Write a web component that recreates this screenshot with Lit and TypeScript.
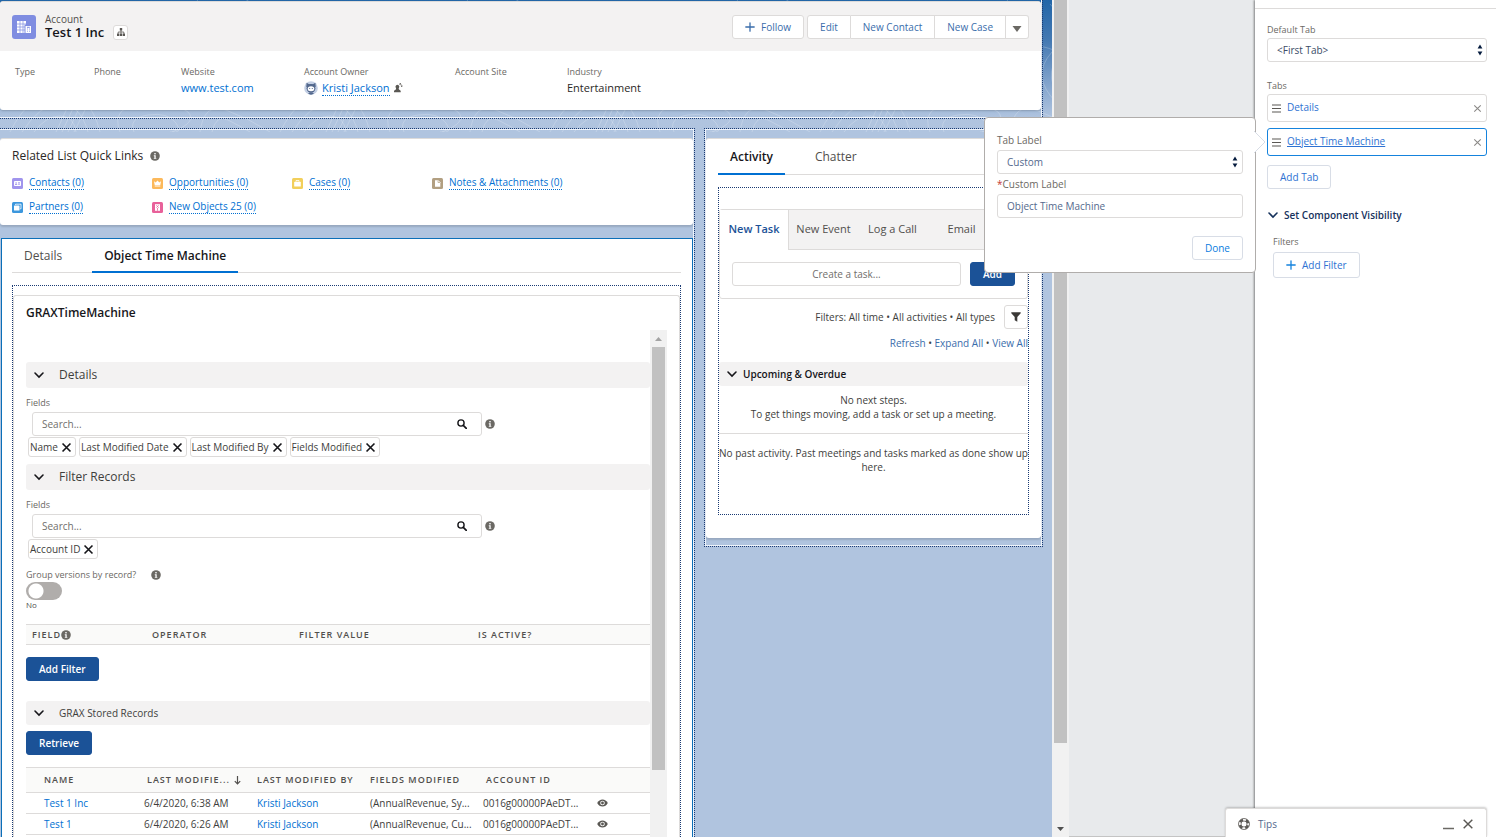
import { LitElement, html, css, svg, nothing } from "lit";
import { customElement, state } from "lit/decorators.js";
import { classMap } from "lit/directives/class-map.js";

const base = css`
  :host,
  * {
    box-sizing: border-box;
  }
  button,
  input,
  select {
    font: inherit;
    color: inherit;
    margin: 0;
  }
  a {
    text-decoration: none;
    color: #0070d2;
  }
  h1,
  h2,
  h3,
  p,
  ul,
  dl,
  dd {
    margin: 0;
    padding: 0;
  }
  ul {
    list-style: none;
  }
  svg {
    display: block;
    flex: none;
  }
  .btn {
    display: inline-flex;
    align-items: center;
    justify-content: center;
    height: 24px;
    padding: 0 12px;
    border: 1px solid #dddbda;
    border-radius: 3px;
    background: #fff;
    color: #3a6dab;
    white-space: nowrap;
  }
  .brand {
    background: #1b5297;
    border-color: #1b5297;
    color: #fff;
    font-weight: 600;
  }
  .field {
    width: 100%;
    height: 24px;
    border: 1px solid #dddbda;
    border-radius: 3px;
    background: #fff;
    padding: 0 9px;
    outline: none;
  }
  .field::placeholder {
    color: #706e6b;
    opacity: 1;
  }
`;

const chevron = (size = 12, color = "#16161a") => html`<svg width=${size} height=${size} viewBox="0 0 12 12" aria-hidden="true">
  <path d="M2 4l4 4 4-4" fill="none" stroke=${color} stroke-width="1.6" stroke-linecap="round" />
</svg>`;

const info = html`<svg width="10" height="10" viewBox="0 0 10 10" aria-hidden="true">
  <circle cx="5" cy="5" r="4.8" fill="#6b6964" />
  <rect x="4.3" y="2" width="1.4" height="1.4" fill="#fff" />
  <path d="M3.8 4.3h1.9v2.6h.6v.9H3.8v-.9h.6V5.2h-.6z" fill="#fff" />
</svg>`;

const cross = (size: number, color: string, width: number) => html`<svg width=${size} height=${size} viewBox="0 0 10 10" aria-hidden="true">
  <path d="M1.4 1.4l7.2 7.2M8.6 1.4L1.4 8.6" stroke=${color} stroke-width=${width} />
</svg>`;

const search = html`<svg width="10" height="10" viewBox="0 0 10 10" aria-hidden="true">
  <circle cx="4" cy="4" r="3.1" fill="none" stroke="#16161a" stroke-width="1.4" />
  <path d="M6.3 6.3l3 3" stroke="#16161a" stroke-width="1.7" stroke-linecap="round" />
</svg>`;

const plus = (color: string) => html`<svg width="10" height="10" viewBox="0 0 10 10" aria-hidden="true">
  <path d="M5 .8v8.4M.8 5h8.4" stroke=${color} stroke-width="1.3" stroke-linecap="round" />
</svg>`;

const eye = html`<svg width="11" height="8" viewBox="0 0 11 8" aria-hidden="true">
  <path d="M.2 4C2.4-.8 8.6-.8 10.8 4 8.600 8.800 2.400 8.800 .2 4z" fill="#5a5854" />
  <circle cx="5.500" cy="4" r="2.300" fill="#fff" />
  <circle cx="5.500" cy="4" r="1.400" fill="#5a5854" />
</svg>`;

const spinner = html`<svg width="6" height="12" viewBox="0 0 6 12" aria-hidden="true">
  <path d="M3 .6l2.400 3.900H.6zM3 11.400L.6 7.500h4.800z" fill="#061c3f" />
</svg>`;

const glyphs: Record<string, { color: string; shape: unknown }> = {
  contacts: {
    color: "#a094ed",
    shape: svg`<rect x="2" y="3" width="7" height="5" rx=".8" fill="#fff"/><path d="M3 6.500h2.200M4.100 4v2M6 4.800h2M6 6.200h2" stroke="#a094ed" stroke-width=".9"/>`,
  },
  opportunities: {
    color: "#fcb95b",
    shape: svg`<path d="M2 3.200l1.700 1.300L5.500 2.400l1.800 2.100L9 3.200 8.300 7H2.700zM2.700 7.600h5.600v1H2.700z" fill="#fff"/>`,
  },
  cases: {
    color: "#f2cf5b",
    shape: svg`<path d="M4 3.700V2.500h3v1.200" fill="none" stroke="#fff" stroke-width=".8"/><rect x="2.200" y="3.700" width="6.600" height="4.800" rx=".6" fill="#fff"/>`,
  },
  notes: {
    color: "#b29f81",
    shape: svg`<path d="M3 2.200h3.300L8.300 4.300v4.500H3z" fill="#fff"/><path d="M6 2.500v2h2" stroke="#b29f81" stroke-width=".7" fill="none"/>`,
  },
  partners: {
    color: "#3c97dd",
    shape: svg`<path d="M3.500 3V2.200h5.500v4.600h-.9" stroke="#fff" stroke-width=".8" fill="none"/><rect x="2" y="3.600" width="5.500" height="4.800" rx=".5" fill="#fff"/>`,
  },
  objects: {
    color: "#e8619a",
    shape: svg`<path d="M3 2.200h5v6.600H3z" fill="#fff"/><path d="M4.300 3.300l2.400 2.300M6.700 3.300L4.300 5.600M5.500 6v2.800" stroke="#e8619a" stroke-width=".8"/>`,
  },
};

const glyph = (name: string) => html`<svg width="11" height="11" viewBox="0 0 11 11" aria-hidden="true">
  <rect width="11" height="11" rx="1.500" fill=${glyphs[name].color} />${glyphs[name].shape}
</svg>`;

@customElement("scroll-track")
class ScrollTrack extends LitElement {
  static styles = css`
    :host {
      display: flex;
      flex-direction: column;
      flex: none;
      width: 17px;
      background: #f1f1f1;
    }
    .arrow {
      height: 17px;
      display: grid;
      place-items: center;
      flex: none;
    }
    .lane {
      flex: 1;
      min-height: 0;
    }
    .thumb {
      margin: 0 2px;
      background: #c1c1c1;
    }
  `;
  static properties = { up: { type: Boolean }, down: { type: Boolean }, size: { type: String } };
  up = false;
  down = false;
  size = "50%";
  render() {
    const arrow = (d: string, fill: string) => html`<div class="arrow">
      <svg width="7" height="4" viewBox="0 0 7 4"><path d=${d} fill=${fill} /></svg>
    </div>`;
    return html`${this.up ? arrow("M3.500 0L7 4H0z", "#a3a3a3") : nothing}
      <div class="lane"><div class="thumb" style="height:${this.size}"></div></div>
      ${this.down ? arrow("M0 0h7L3.500 4z", "#505050") : nothing}`;
  }
}

@customElement("record-header")
class RecordHeader extends LitElement {
  static styles = [
    base,
    css`
      :host {
        display: block;
        background: #fff;
        border-radius: 3px;
        box-shadow: 0 1px 2px rgba(0, 0, 0, 0.18);
        border-top: 1px solid #dddbda;
      }
      .head {
        display: flex;
        align-items: center;
        gap: 9px;
        height: 49px;
        padding: 0 12px;
        background: #f3f2f2;
        border-radius: 3px 3px 0 0;
      }
      .title {
        flex: 1;
      }
      .kind {
        line-height: 11px;
        color: #514f4d;
      }
      .name {
        display: flex;
        align-items: center;
        gap: 9px;
      }
      h1 {
        font-size: 13px;
        line-height: 14px;
        font-weight: 600;
        color: #16161a;
      }
      .tree {
        width: 15px;
        height: 15px;
        padding: 0;
        display: grid;
        place-items: center;
        border: 1px solid #dddbda;
        border-radius: 3px;
        background: #fff;
      }
      .actions {
        display: flex;
        gap: 3px;
      }
      .follow {
        gap: 6px;
      }
      .group {
        display: flex;
      }
      .group .btn {
        border-radius: 0;
        border-left-width: 0;
      }
      .group .btn:first-child {
        border-left-width: 1px;
        border-radius: 3px 0 0 3px;
      }
      .group .btn:last-child {
        border-radius: 0 3px 3px 0;
        padding: 4px 6px 0;
      }
      dl {
        display: grid;
        grid-template-columns: 79px 87px 123px 151px 112px 1fr;
        padding: 15px 15px 13px;
      }
      dt {
        font-size: 9px;
        line-height: 12px;
        color: #6b6964;
      }
      dd {
        display: flex;
        align-items: center;
        gap: 4px;
        height: 18px;
        margin-top: 1px;
        font-size: 11px;
        color: #2b2826;
      }
      .dotted {
        border-bottom: 1px dotted #0070d2;
        line-height: 15px;
      }
    `,
  ];
  render() {
    return html`<div class="head">
        <svg width="24" height="24" viewBox="0 0 24 24" aria-hidden="true">
          <rect width="24" height="24" rx="3" fill="#7f8de1" />
          <path d="M5 6h9v3.500h-1.500V18H5z" fill="#fff" />
          <path d="M8 6v12M11 6v12M5 9h9M5 12h8M5 15h8" stroke="#7f8de1" stroke-width=".7" />
          <path d="M13.500 11H19v7h-5.500z" fill="#fff" />
          <path d="M15 14h.8M17 14h.8M15 16.200h.8M17 16.200h.8M15 12.300h2.800" stroke="#7f8de1" />
        </svg>
        <div class="title">
          <div class="kind">Account</div>
          <div class="name">
            <h1>Test 1 Inc</h1>
            <button class="tree" aria-label="View hierarchy">
              <svg width="8" height="8" viewBox="0 0 8 8">
                <path d="M2.800 0h2.400v2.400H2.800zM0 5.600h2.300V8H0zM2.900 5.600h2.200V8H2.900zM5.700 5.600H8V8H5.700z" fill="#5a5854" />
                <path d="M4 2v3.600M1.200 5.600V4h5.600v1.600" stroke="#5a5854" stroke-width=".8" fill="none" />
              </svg>
            </button>
          </div>
        </div>
        <div class="actions">
          <button class="btn follow">${plus("#3a6dab")}Follow</button>
          <div class="group">
            <button class="btn">Edit</button><button class="btn">New Contact</button><button class="btn">New Case</button
            ><button class="btn" aria-label="More actions">
              <svg width="10" height="6" viewBox="0 0 10 6"><path d="M.5 0h9L5 6z" fill="#6b6964" /></svg>
            </button>
          </div>
        </div>
      </div>
      <dl>
        <div><dt>Type</dt></div>
        <div><dt>Phone</dt></div>
        <div><dt>Website</dt><dd><a href="#">www.test.com</a></dd></div>
        <div>
          <dt>Account Owner</dt>
          <dd>
            <svg width="14" height="14" viewBox="0 0 14 14" aria-hidden="true">
              <circle cx="7" cy="7" r="6.800" fill="#c3cfe4" />
              <path d="M2.600 1.800l2.500 1.400h3.800l2.500-1.400.3 4.200H2.300z" fill="#54698d" />
              <circle cx="7" cy="7.300" r="4.400" fill="#54698d" />
              <ellipse cx="7" cy="7.700" rx="3.300" ry="2.500" fill="#fff" />
              <circle cx="5.700" cy="7.500" r=".6" fill="#54698d" />
              <circle cx="8.300" cy="7.500" r=".6" fill="#54698d" />
              <path d="M4 12.500c1-1.500 5-1.500 6 0-1.500 1.500-4.500 1.500-6 0z" fill="#54698d" />
            </svg>
            <a class="dotted" href="#">Kristi Jackson</a>
            <svg width="9" height="10" viewBox="0 0 9 10" aria-hidden="true">
              <path d="M1.500 3.200a2 2.200 0 0 1 3.800 0c0 1.300-.6 1.800-.6 2.700 0 .8 2 1 2 2.200V9.300H0V8.100c0-1.200 2.100-1.400 2.100-2.200 0-.9-.6-1.400-.6-2.700z" fill="#5a5854" />
              <path d="M5.600 1.200c1.600 0 2.400.8 2.400 2.400M5.300 1.200L7 .2M8 4L7 2.800" fill="none" stroke="#5a5854" stroke-width=".8" />
            </svg>
          </dd>
        </div>
        <div><dt>Account Site</dt></div>
        <div><dt>Industry</dt><dd>Entertainment</dd></div>
      </dl>`;
  }
}

@customElement("quick-links")
class QuickLinks extends LitElement {
  static styles = [
    base,
    css`
      :host {
        display: block;
        background: #fff;
        border-top: 1px solid #dddbda;
        border-radius: 3px;
        padding: 8px 12px 6px;
        box-shadow: 0 2px 2px rgba(0, 0, 0, 0.14);
      }
      h2 {
        display: flex;
        align-items: center;
        gap: 7px;
        font-size: 12px;
        line-height: 18px;
        font-weight: 400;
        color: #2b2826;
      }
      ul {
        display: grid;
        grid-template-columns: repeat(4, 140px);
        grid-auto-rows: 24px;
        margin-top: 6px;
      }
      li {
        display: flex;
        align-items: center;
        gap: 6px;
        white-space: nowrap;
      }
      a {
        line-height: 13px;
        border-bottom: 1px dotted #0070d2;
      }
    `,
  ];
  render() {
    const links = [
      ["contacts", "Contacts (0)"],
      ["opportunities", "Opportunities (0)"],
      ["cases", "Cases (0)"],
      ["notes", "Notes & Attachments (0)"],
      ["partners", "Partners (0)"],
      ["objects", "New Objects 25 (0)"],
    ];
    return html`<h2>Related List Quick Links ${info}</h2>
      <ul>
        ${links.map(([icon, text]) => html`<li>${glyph(icon)}<a href="#">${text}</a></li>`)}
      </ul>`;
  }
}

const tabStyles = css`
  .tabs {
    display: flex;
    gap: 18px;
    border-bottom: 1px solid #dddbda;
  }
  .tab {
    height: 34px;
    margin-bottom: -1px;
    padding: 2px 12px 0;
    border: 0;
    border-bottom: 2px solid transparent;
    background: none;
    font-size: 12px;
    color: #514f4d;
  }
  .tab.on {
    border-color: #0070d2;
    font-weight: 600;
    color: #16161a;
  }
`;

@customElement("time-machine")
class TimeMachine extends LitElement {
  static styles = [
    base,
    tabStyles,
    css`
      :host {
        display: flex;
        flex-direction: column;
        background: #fff;
        border: 1px solid #0b6fb8;
        border-bottom: 0;
        padding: 0 11px 0 10px;
        min-height: 0;
      }
      .tabs {
        flex: none;
      }
      .zone {
        flex: 1;
        min-height: 0;
        display: flex;
        margin-top: 12px;
        padding-top: 9px;
        border: 1px dotted #1a3a73;
        border-bottom: 0;
      }
      .card {
        flex: 1;
        min-width: 0;
        display: flex;
        flex-direction: column;
        border: 1px solid #dddbda;
        border-bottom: 0;
        border-radius: 3px 3px 0 0;
        padding: 8px 12px 0;
      }
      h2 {
        font-size: 12px;
        line-height: 18px;
        font-weight: 600;
        color: #16161a;
      }
      .scroller {
        flex: 1;
        min-height: 0;
        display: flex;
        margin-top: 8px;
      }
      .content {
        flex: 1;
        min-width: 0;
        padding-top: 32px;
        overflow: hidden;
      }
      .section {
        display: flex;
        align-items: center;
        gap: 14px;
        width: 100%;
        height: 26px;
        padding: 0 7px;
        border: 0;
        border-radius: 3px;
        background: #f3f2f2;
        font-size: 12px;
        color: #3e3e3c;
      }
      .section.small {
        height: 24px;
        font-size: 10px;
        margin: 20px 0 6px;
      }
      .caption {
        display: block;
        font-size: 9px;
        line-height: 12px;
        color: #6b6964;
      }
      .block {
        padding: 9px 0 7px;
      }
      .row {
        display: flex;
        align-items: center;
        gap: 3px;
        margin: 3px 0 1px;
        padding-left: 6px;
      }
      .box {
        position: relative;
        width: 450px;
      }
      .box svg {
        position: absolute;
        right: 15px;
        top: 7px;
      }
      .pills {
        display: flex;
        gap: 3px;
        padding-left: 2px;
      }
      .pill {
        display: flex;
        align-items: center;
        gap: 3px;
        height: 20px;
        padding: 0 3px 0 1px;
        border: 1px solid #dddbda;
        border-radius: 3px;
        white-space: nowrap;
        color: #3e3e3c;
      }
      .pill button {
        display: flex;
        padding: 0;
        border: 0;
        background: none;
      }
      .group {
        display: flex;
        gap: 15px;
        align-items: center;
        margin-top: 3px;
      }
      .toggle {
        appearance: none;
        display: block;
        width: 36px;
        height: 18px;
        margin: 1px 0 0;
        border-radius: 9px;
        background: radial-gradient(circle at 10px 9px, #fff 7px, transparent 8px) #b0adab;
      }
      .state {
        font-size: 8px;
        line-height: 10px;
        color: #514f4d;
      }
      table {
        width: 100%;
        border-collapse: collapse;
        table-layout: fixed;
      }
      th,
      td {
        padding: 0 0 0 12px;
        text-align: left;
        font-weight: 400;
        white-space: nowrap;
      }
      th {
        font-size: 9px;
        font-weight: 600;
        letter-spacing: 1px;
        text-transform: uppercase;
        color: #514f4d;
        background: #fafaf9;
      }
      th svg {
        display: inline-block;
        vertical-align: -2px;
      }
      tr {
        border-top: 1px solid #dddbda;
        border-bottom: 1px solid #dddbda;
      }
      .filters {
        margin: 14px 0 12px;
      }
      .filters th {
        height: 20px;
        padding-left: 6px;
      }
      .records {
        margin-top: 12px;
      }
      .records th {
        height: 25px;
      }
      .records td {
        height: 21px;
        color: #3e3e3c;
      }
      .records .first {
        padding-left: 18px;
      }
      .records th.shift {
        padding-left: 15px;
      }
      .sort {
        display: flex;
        align-items: center;
        gap: 4px;
      }
    `,
  ];
  @state() private tab = "Object Time Machine";
  private lookup(id: string, names: string[]) {
    return html`<div class="block">
      <label class="caption" for=${id}>Fields</label>
      <div class="row">
        <div class="box"><input class="field" id=${id} placeholder="Search..." />${search}</div>
        ${info}
      </div>
      <div class="pills">
        ${names.map((n) => html`<span class="pill">${n}<button aria-label="Remove ${n}">${cross(11, "#16161a", 1.5)}</button></span>`)}
      </div>
    </div>`;
  }
  render() {
    const rows = [
      ["Test 1 Inc", "6/4/2020, 6:38 AM", "(AnnualRevenue, Sy..."],
      ["Test 1", "6/4/2020, 6:26 AM", "(AnnualRevenue, Cu..."],
    ];
    return html`<div class="tabs" role="tablist">
        ${["Details", "Object Time Machine"].map(
          (t) => html`<button role="tab" class=${classMap({ tab: true, on: t === this.tab })} @click=${() => (this.tab = t)}>${t}</button>`
        )}
      </div>
      <div class="zone">
        <div class="card">
          <h2>GRAXTimeMachine</h2>
          <div class="scroller">
            <div class="content">
              <button class="section">${chevron()}Details</button>
              ${this.lookup("fields", ["Name", "Last Modified Date", "Last Modified By", "Fields Modified"])}
              <button class="section">${chevron()}Filter Records</button>
              ${this.lookup("records", ["Account ID"])}
              <div class="group"><label class="caption" for="group">Group versions by record?</label>${info}</div>
              <input class="toggle" id="group" type="checkbox" role="switch" />
              <div class="state">No</div>
              <table class="filters">
                <colgroup><col width="120" /><col width="147" /><col width="179" /><col /></colgroup>
                <thead>
                  <tr><th>Field${info}</th><th>Operator</th><th>Filter Value</th><th>Is Active?</th></tr>
                </thead>
              </table>
              <button class="btn brand">Add Filter</button>
              <button class="section small">${chevron()}GRAX Stored Records</button>
              <button class="btn brand">Retrieve</button>
              <table class="records">
                <colgroup><col width="106" /><col width="113" /><col width="113" /><col width="113" /><col width="114" /><col /></colgroup>
                <thead>
                  <tr>
                    <th class="first">Name</th>
                    <th class="shift">
                      <span class="sort"
                        >Last Modifie...<svg width="7" height="9" viewBox="0 0 7 9" aria-hidden="true">
                          <path d="M3.500 0v8M.8 5.200l2.700 2.800 2.700-2.800" fill="none" stroke="#514f4d" stroke-width="1.200" /></svg
                      ></span>
                    </th>
                    <th>Last Modified By</th>
                    <th>Fields Modified</th>
                    <th class="shift">Account ID</th>
                    <th></th>
                  </tr>
                </thead>
                <tbody>
                  ${rows.map(
                    ([name, date, fields]) => html`<tr>
                      <td class="first"><a href="#">${name}</a></td>
                      <td>${date}</td>
                      <td><a href="#">Kristi Jackson</a></td>
                      <td>${fields}</td>
                      <td>0016g00000PAeDT...</td>
                      <td>${eye}</td>
                    </tr>`
                  )}
                </tbody>
              </table>
            </div>
            <scroll-track up size="86.400%"></scroll-track>
          </div>
        </div>
      </div>`;
  }
}

@customElement("activity-panel")
class ActivityPanel extends LitElement {
  static styles = [
    base,
    tabStyles,
    css`
      :host {
        display: block;
        background: #fff;
        border-top: 1px solid #dddbda;
        border-radius: 3px;
        padding: 0 12px 23px;
        box-shadow: 0 2px 2px rgba(0, 0, 0, 0.14);
        color: #3e3e3c;
      }
      .tabs .tab {
        height: 36px;
      }
      .zone {
        margin-top: 12px;
        border: 1px dotted #1a3a73;
        padding: 21px 0 40px;
      }
      .composer {
        border: 1px solid #dddbda;
        border-radius: 3px;
      }
      .kinds {
        display: grid;
        grid-template-columns: repeat(4, 69px) 1fr;
        height: 40px;
        background: #f3f2f2;
      }
      .kinds button {
        padding: 0 0 2px;
        border: 0;
        border-bottom: 1px solid #dddbda;
        background: none;
        font-size: 11px;
        color: #514f4d;
      }
      .kinds .on {
        background: #fff;
        border-bottom: 0;
        border-right: 1px solid #dddbda;
        font-weight: 600;
        color: #1b5297;
      }
      .kinds span {
        border-bottom: 1px solid #dddbda;
      }
      .create {
        display: flex;
        gap: 9px;
        padding: 12px;
      }
      .create .field {
        flex: 1;
        min-width: 0;
        text-align: center;
      }
      .filters {
        display: flex;
        align-items: center;
        justify-content: flex-end;
        gap: 9px;
        margin-top: 6px;
      }
      .filters .btn {
        width: 24px;
        padding: 0;
      }
      .links {
        text-align: right;
        line-height: 14px;
        margin-top: 7px;
        white-space: nowrap;
      }
      .links a {
        color: #3a6dab;
      }
      .section {
        display: flex;
        align-items: center;
        gap: 5px;
        width: 100%;
        height: 24px;
        margin: 12px 0 7px;
        padding: 0 7px;
        border: 0;
        border-radius: 3px;
        background: #f3f2f2;
        font-weight: 600;
        color: #16161a;
      }
      p {
        text-align: center;
        line-height: 14px;
      }
      .past {
        margin-top: 12px;
        padding-top: 12px;
        border-top: 1px solid #dddbda;
      }
      .past p {
        margin: 0 -4px;
      }
    `,
  ];
  @state() private tab = "Activity";
  render() {
    return html`<div class="tabs" role="tablist">
        ${["Activity", "Chatter"].map(
          (t) => html`<button role="tab" class=${classMap({ tab: true, on: t === this.tab })} @click=${() => (this.tab = t)}>${t}</button>`
        )}
      </div>
      <div class="zone">
        <div class="composer">
          <div class="kinds">
            <button class="on">New Task</button><button>New Event</button><button>Log a Call</button><button>Email</button><span></span>
          </div>
          <div class="create">
            <input class="field" aria-label="Subject" placeholder="Create a task..." />
            <button class="btn brand">Add</button>
          </div>
        </div>
        <div class="filters">
          <span>Filters: All time • All activities • All types</span>
          <button class="btn" aria-label="Filter">
            <svg width="10" height="10" viewBox="0 0 10 10"><path d="M.3.300h9.400v1L6.300 5v4.700L3.700 8.300V5L.3 1.300z" fill="#3a3836" /></svg>
          </button>
        </div>
        <div class="links"><a href="#">Refresh</a> • <a href="#">Expand All</a> • <a href="#">View All</a></div>
        <button class="section">${chevron()}Upcoming &amp; Overdue</button>
        <p>No next steps.</p>
        <p>To get things moving, add a task or set up a meeting.</p>
        <div class="past"><p>No past activity. Past meetings and tasks marked as done show up here.</p></div>
      </div>`;
  }
}

@customElement("property-panel")
class PropertyPanel extends LitElement {
  static styles = [
    base,
    css`
      :host {
        display: block;
        background: #fff;
        padding-top: 8px;
        box-shadow: -1px 0 2px rgba(0, 0, 0, 0.45);
        color: #54698d;
      }
      .body {
        border-top: 1px solid #dddbda;
        padding: 15px 9px 0 12px;
      }
      .caption {
        display: block;
        line-height: 12px;
        margin-bottom: 2px;
        font-size: 9px;
        color: #6b6964;
      }
      .select {
        position: relative;
        margin-bottom: 18px;
      }
      select {
        appearance: none;
        padding: 0 2px;
        color: #3b4b66;
      }
      .select svg {
        position: absolute;
        right: 4px;
        top: 6px;
      }
      .item {
        display: flex;
        align-items: center;
        gap: 6px;
        height: 28px;
        margin-bottom: 6px;
        padding: 0 4px;
        border: 1px solid #dddbda;
        border-radius: 3px;
      }
      .item a {
        flex: 1;
        line-height: 13px;
        padding-bottom: 2px;
        color: #2e72d2;
      }
      .item.on {
        border-color: #1583dd;
      }
      .item.on a {
        text-decoration: underline;
      }
      .item button {
        display: flex;
        padding: 0;
        border: 0;
        background: none;
      }
      .btn {
        color: #2e72d2;
        border-color: #d8dde6;
      }
      .add {
        margin-top: 3px;
      }
      h3 {
        display: flex;
        align-items: center;
        gap: 5px;
        margin: 17px 0 12px;
        font-size: 10px;
        line-height: 18px;
        font-weight: 600;
        color: #16325c;
      }
      .inset {
        padding-left: 6px;
      }
      .inset .caption {
        margin-bottom: 4px;
      }
      .filter {
        height: 26px;
        gap: 6px;
      }
    `,
  ];
  render() {
    return html`<div class="body">
      <label class="caption" for="default-tab">Default Tab</label>
      <div class="select">
        <select class="field" id="default-tab"><option>&lt;First Tab&gt;</option></select>${spinner}
      </div>
      <span class="caption">Tabs</span>
      ${["Details", "Object Time Machine"].map(
        (name, i) => html`<div class=${classMap({ item: true, on: i === 1 })}>
          <svg width="9" height="9" viewBox="0 0 9 9" aria-hidden="true"><path d="M0 1h9M0 4.500h9M0 8h9" stroke="#5a5854" stroke-width="1.200" /></svg>
          <a href="#">${name}</a><button aria-label="Remove ${name}">${cross(9, "#8a8886", 1.2)}</button>
        </div>`
      )}
      <button class="btn add">Add Tab</button>
      <h3>${chevron(12, "#16325c")}Set Component Visibility</h3>
      <div class="inset">
        <span class="caption">Filters</span>
        <button class="btn filter">${plus("#1583dd")}Add Filter</button>
      </div>
    </div>`;
  }
}

@customElement("tab-popover")
class TabPopover extends LitElement {
  static styles = [
    base,
    css`
      :host {
        display: flex;
        flex-direction: column;
        width: 272px;
        padding: 15px 12px 12px;
        background: #fff;
        border: 1px solid #b0adab;
        border-radius: 4px;
        color: #54698d;
      }
      label {
        line-height: 14px;
        margin-bottom: 3px;
        color: #6b6964;
      }
      .required {
        color: #c23934;
      }
      .select {
        position: relative;
        margin-bottom: 3px;
      }
      select {
        appearance: none;
        padding: 0 2px;
      }
      .select svg {
        position: absolute;
        right: 5px;
        top: 6px;
      }
      .btn {
        align-self: flex-end;
        margin-top: 18px;
        color: #0a7de0;
        border-color: #d8dde6;
      }
      .nub {
        position: absolute;
        right: -11px;
        top: 12px;
      }
    `,
  ];
  render() {
    return html`<label for="kind">Tab Label</label>
      <div class="select">
        <select class="field" id="kind"><option>Custom</option></select>${spinner}
      </div>
      <label for="custom"><span class="required">*</span>Custom Label</label>
      <input class="field" id="custom" value="Object Time Machine" />
      <button class="btn">Done</button>
      <svg class="nub" width="12" height="24" viewBox="0 0 12 24" aria-hidden="true">
        <path d="M0 1l11 11L0 23z" fill="#fff" />
        <path d="M0 1l11 11L0 23" fill="none" stroke="#d8dde6" />
      </svg>`;
  }
}

@customElement("tips-bar")
class TipsBar extends LitElement {
  static styles = [
    base,
    css`
      :host {
        display: flex;
        align-items: center;
        gap: 8px;
        width: 262px;
        height: 29px;
        padding: 2px 12px 0;
        background: #fff;
        border: 1px solid #dddbda;
        border-bottom: 0;
        border-radius: 3px 3px 0 0;
        box-shadow: 0 -1px 2px rgba(0, 0, 0, 0.2);
        color: #54698d;
      }
      .label {
        flex: 1;
      }
      button {
        display: flex;
        padding: 0;
        border: 0;
        background: none;
      }
    `,
  ];
  render() {
    return html`<svg width="12" height="12" viewBox="0 0 12 12" aria-hidden="true">
        <circle cx="6" cy="6" r="4.300" fill="none" stroke="#5a5854" stroke-width="2.400" stroke-dasharray="3.700 3.054" stroke-dashoffset="-1.500" />
        <circle cx="6" cy="6" r="5.500" fill="none" stroke="#5a5854" stroke-width=".8" />
        <circle cx="6" cy="6" r="3" fill="none" stroke="#5a5854" stroke-width=".8" />
      </svg>
      <span class="label">Tips</span>
      <button aria-label="Minimize">
        <svg width="11" height="12" viewBox="0 0 11 12"><path d="M0 10.500h11" stroke="#6b6964" stroke-width="1.500" /></svg>
      </button>
      <button aria-label="Close">${cross(12, "#5a5854", 1.2)}</button>`;
  }
}

@customElement("app-root")
class AppRoot extends LitElement {
  static styles = css`
    * {
      box-sizing: border-box;
    }
    :host {
      display: flex;
      position: relative;
      height: 100vh;
      overflow: hidden;
      background: #e8eaec;
      font-family: "Open Sans", "Noto Sans", sans-serif;
      font-size: 10px;
      line-height: 14px;
    }
    .canvas {
      position: relative;
      flex: 1;
      min-width: 0;
      display: flex;
      flex-direction: column;
      padding-right: 9px;
      background: linear-gradient(#2266a8, #4479b2 40px, #7da0ca 80px, #b0c4df 118px);
    }
    .contours {
      position: absolute;
      inset: 0 0 auto 0;
      width: 100%;
      height: 132px;
    }
    .region {
      position: relative;
      min-width: 0;
      border: 1px dotted #1a3a73;
      border-left: 0;
      box-shadow: inset -1px -1px #eef3fa;
    }
    .top {
      border-top: 0;
      padding: 1px 1px 8px 0;
    }
    .columns {
      flex: 1;
      min-height: 0;
      display: grid;
      grid-template-columns: 695fr 339fr;
      grid-template-rows: minmax(0, 1fr);
      gap: 9px;
      align-items: start;
      margin-top: 9px;
    }
    .main {
      align-self: stretch;
      display: flex;
      flex-direction: column;
      gap: 13px;
      padding: 9px 1px 0 0;
      border-bottom: 0;
      box-shadow: inset -1px 1px #eef3fa;
    }
    time-machine {
      flex: 1;
      margin-left: 1px;
    }
    .side {
      padding: 9px 1px 8px;
      border-left: 1px dotted #1a3a73;
      box-shadow: inset 0 0 0 1px #eef3fa;
    }
    .gutter {
      flex: none;
      width: 186px;
      border-bottom: 1px solid #c4c4c4;
    }
    property-panel {
      flex: none;
      width: 241px;
    }
    tab-popover {
      position: absolute;
      right: 240px;
      top: 117px;
    }
    tips-bar {
      position: absolute;
      right: 9px;
      bottom: 0;
    }
  `;
  render() {
    return html`<div class="canvas">
        <svg class="contours" aria-hidden="true">
          <defs>
            <pattern id="map" width="270" height="132" patternUnits="userSpaceOnUse">
              <g fill="none" stroke="#fff" stroke-opacity=".2">
                <path d="M0 20q30 30 60 5t70 10 60-20 80 5M0 60q40-30 70 0t60 20 50-30 90 10M10 132q20-40 50-40t40 40M22 132q18-28 38-28t28 28M34 132q12-16 26-16t16 16" />
                <path d="M120 132q-10-26 24-28t44 8-16 20M134 132q-6-14 14-17t28 8-6 9M200 132q4-30 26-22t44 22M212 132q4-18 16-12t22 12" />
                <path d="M56 132l14-30M62 132l14-30M68 132l14-30M74 132l14-28M250 10q20 20 0 44t6 50M240 4q24 24 2 48t4 50" />
              </g>
            </pattern>
          </defs>
          <rect width="100%" height="132" fill="url(#map)" />
        </svg>
        <div class="region top"><record-header></record-header></div>
        <div class="columns">
          <div class="region main">
            <quick-links></quick-links>
            <time-machine></time-machine>
          </div>
          <div class="region side"><activity-panel></activity-panel></div>
        </div>
      </div>
      <scroll-track down size="90.600%"></scroll-track>
      <div class="gutter"></div>
      <property-panel></property-panel>
      <tab-popover></tab-popover>
      <tips-bar></tips-bar>`;
  }
}
